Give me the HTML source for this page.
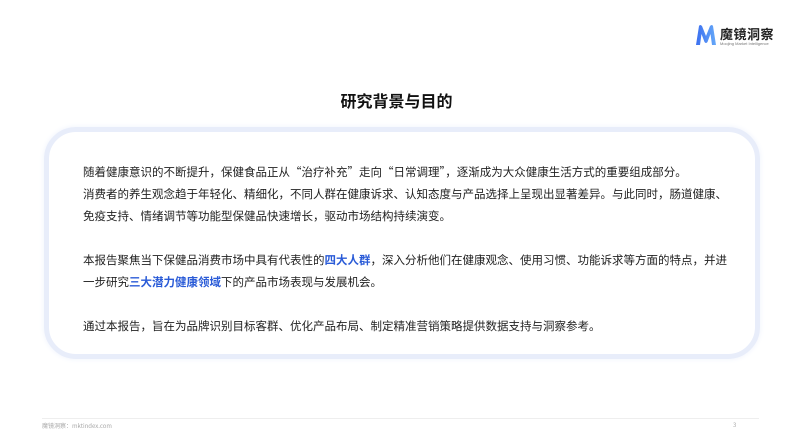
<!DOCTYPE html>
<html><head><meta charset="utf-8"><style>
body{margin:0;width:793px;height:446px;background:#fff;position:relative;overflow:hidden;font-family:"Noto Sans CJK SC","Liberation Sans",sans-serif;}
.logo{position:absolute;left:695px;top:24px;}
.lt{position:absolute;left:720px;top:24px;font-size:13px;font-weight:bold;color:#222;letter-spacing:0.5px;white-space:nowrap}
.ls{position:absolute;left:720px;top:41px;font-size:4px;color:#777;white-space:nowrap;font-family:"Liberation Sans",sans-serif}
h1{position:absolute;top:88px;left:0;width:793px;text-align:center;margin:0;font-size:16px;font-weight:bold;color:#111;line-height:24px}
.card{position:absolute;left:44px;top:127px;width:706px;height:222px;border:5px solid #e8edfa;border-radius:32px;box-shadow:0 0 6px #eef2fc;}
.tx{position:absolute;left:83px;top:161px;font-size:11.5px;line-height:22px;color:#222;white-space:nowrap}
.b{color:#2a5bd7;font-weight:bold}
.hr{position:absolute;left:42px;top:418px;width:717px;height:1px;background:#eee}
.ft{position:absolute;left:42px;top:421px;font-size:6px;color:#aaa}
.pn{position:absolute;left:733px;top:420px;font-size:6px;color:#aaa}
</style></head><body>
<svg class="logo" width="22" height="22" viewBox="0 0 22 22"><defs><linearGradient id="g" x1="0" x2="1"><stop offset="0" stop-color="#3b6ff0"/><stop offset="1" stop-color="#66a8f8"/></linearGradient></defs><path d="M1 21 L4 2 Q5 0 7 2 L11 12 L15 2 Q17 0 18 2 L21 21 L17 21 L15.5 10 L12.5 18 Q11 20 9.5 18 L6.5 10 L5 21 Z" fill="url(#g)"/></svg>
<div class="lt">魔镜洞察</div>
<div class="ls">Moojing Market Intelligence</div>
<h1>研究背景与目的</h1>
<div class="card"></div>
<div class="tx">随着健康意识的不断提升，保健食品正从“治疗补充”走向“日常调理”，逐渐成为大众健康生活方式的重要组成部分。<br>消费者的养生观念趋于年轻化、精细化，不同人群在健康诉求、认知态度与产品选择上呈现出显著差异。与此同时，肠道健康、<br>免疫支持、情绪调节等功能型保健品快速增长，驱动市场结构持续演变。<br><br>本报告聚焦当下保健品消费市场中具有代表性的<span class="b">四大人群</span>，深入分析他们在健康观念、使用习惯、功能诉求等方面的特点，并进<br>一步研究<span class="b">三大潜力健康领域</span>下的产品市场表现与发展机会。<br><br>通过本报告，旨在为品牌识别目标客群、优化产品布局、制定精准营销策略提供数据支持与洞察参考。</div>
<div class="hr"></div>
<div class="ft">魔镜洞察：mktindex.com</div>
<div class="pn">3</div>
</body></html>
